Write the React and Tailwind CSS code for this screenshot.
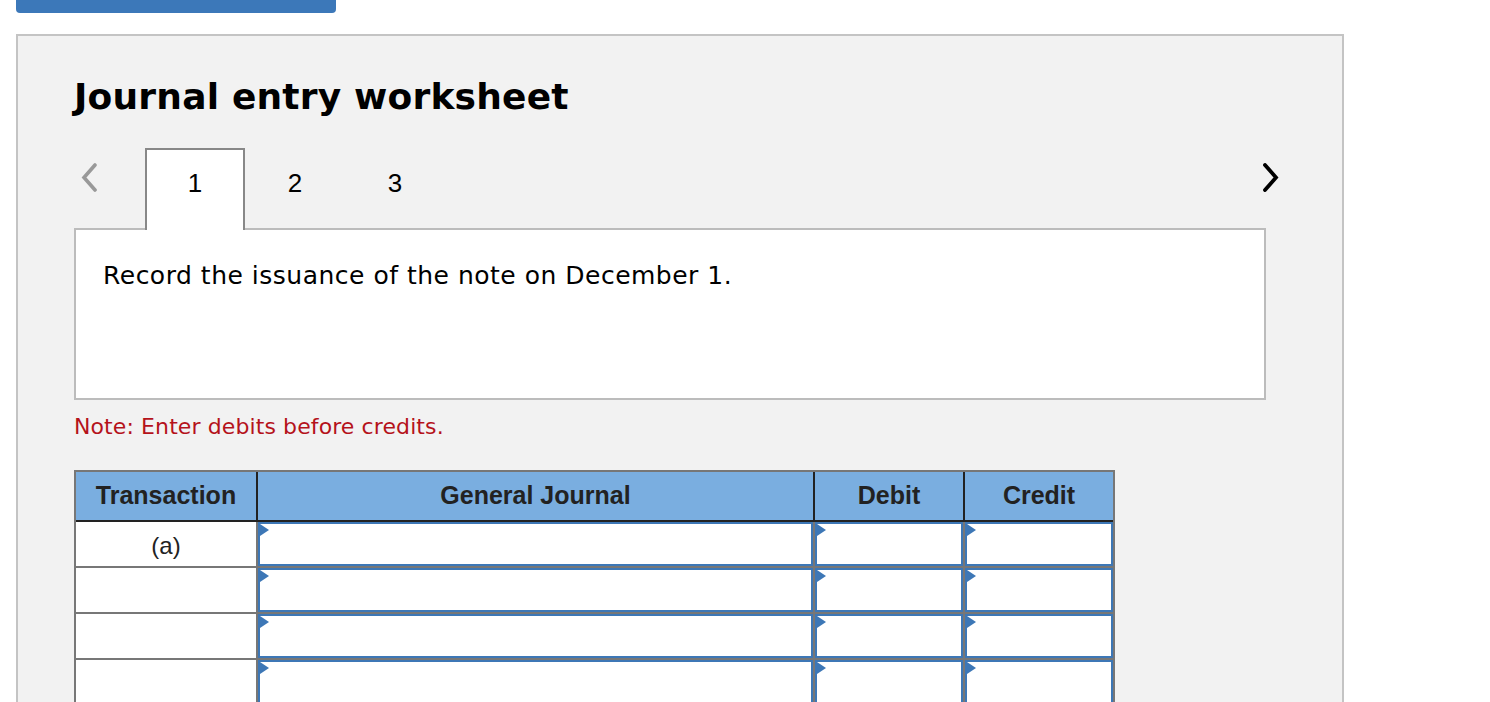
import React from 'react';

const verdana = { fontFamily: '"DejaVu Sans", Verdana, sans-serif' };

function Chevron({ dir, color, width = 3.6 }) {
    const d = dir === 'left' ? 'M14 2 L3 14.5 L14 27' : 'M3 2 L14 14.5 L3 27';
    return (
        <svg width="17" height="29" viewBox="0 0 17 29" fill="none">
            <path d={d} stroke={color} strokeWidth={width} strokeLinecap="round" strokeLinejoin="miter" />
        </svg>
    );
}

function InputCell({ last }) {
    return (
        <div className={`h-[44px] ${last ? '' : 'border-r-2 border-[#777]'}`}>
            <div className="relative h-full border-2 border-[#3d77b6] bg-white">
                <svg className="absolute left-0 top-0" width="9" height="12" viewBox="0 0 9 12">
                    <path d="M0 0 L9 6 L0 12 Z" fill="#3d77b6" />
                </svg>
            </div>
        </div>
    );
}

function Row({ label }) {
    return (
        <div className="grid grid-cols-[182px_557px_150px_148px] border-b-2 border-[#777]">
            <div className="h-[44px] border-r-2 border-[#777] bg-white flex items-center justify-center pt-[3px] text-[24px] text-[#222]">
                {label}
            </div>
            <InputCell />
            <InputCell />
            <InputCell last />
        </div>
    );
}

export default function App() {
    const headers = ['Transaction', 'General Journal', 'Debit', 'Credit'];

    return (
        <div className="min-h-[702px] bg-white overflow-hidden" style={{ fontFamily: '"Liberation Sans", Arial, sans-serif' }}>
            <div className="ml-[16px] w-[320px] h-[13px] bg-[#3c78b9] rounded-b-[4px]"></div>

            <div className="ml-[16px] mt-[21px] w-[1328px] h-[700px] border-2 border-[#c4c4c4] bg-[#f2f2f2] pl-[56px] pt-[43px]">
                <h1 className="text-[36px] font-bold leading-none tracking-[0.2px] text-black" style={verdana}>Journal entry worksheet</h1>

                {/* tab strip */}
                <div className="w-[1205px] mt-[33px] flex items-start h-[80px]">
                    <div className="w-[71px] pl-[7px] pt-[15px]">
                        <Chevron dir="left" color="#999" />
                    </div>
                    <div className="relative z-10 w-[100px] h-[82px] border-2 border-b-0 border-[#888] bg-white text-center pt-[20px] text-[26px] leading-none text-black">1</div>
                    <div className="w-[100px] text-center pt-[22px] text-[26px] leading-none text-black">2</div>
                    <div className="w-[100px] text-center pt-[22px] text-[26px] leading-none text-black">3</div>
                    <div className="flex-1"></div>
                    <div className="w-[17px] pt-[15px]">
                        <Chevron dir="right" color="#000" width={3.8} />
                    </div>
                </div>

                <div className="w-[1192px] h-[172px] border-2 border-[#bcbcbc] bg-white pl-[27px] pt-[33px]">
                    <p className="text-[25px] leading-none tracking-[0.5px] text-black" style={verdana}>Record the issuance of the note on December 1.</p>
                </div>

                <p className="mt-[16px] text-[22px] leading-none tracking-[0.1px] text-[#b5121b]" style={verdana}>Note: Enter debits before credits.</p>

                <div className="mt-[32px] w-[1041px] border-2 border-b-0 border-[#777]">
                    <div className="grid grid-cols-[182px_557px_150px_148px] bg-[#7aaee0] border-b-2 border-[#222]">
                        {headers.map((h, i) => (
                            <div key={h} className={`h-[48px] flex items-center justify-center text-[25px] font-bold text-[#222] ${i < 3 ? 'border-r-2 border-[#222]' : ''}`}>
                                {h}
                            </div>
                        ))}
                    </div>
                    <Row label="(a)" />
                    <Row label="" />
                    <Row label="" />
                    <Row label="" />
                </div>
            </div>
        </div>
    );
}
